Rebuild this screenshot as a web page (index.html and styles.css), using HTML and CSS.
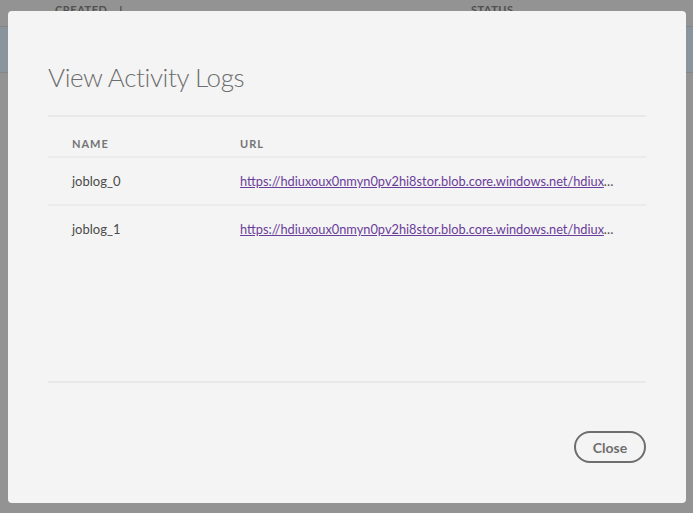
FILE: index.html
```html
<!DOCTYPE html>
<html>
<head>
<meta charset="utf-8">
<link rel="stylesheet" href="styles.css">
</head>
<body>
<div class="page">
  <div class="page-head">
    <span class="col-created">CREATED <span class="arrow">&#8595;</span></span>
    <span class="col-status">STATUS</span>
  </div>
  <div class="page-row"></div>
</div>
<div class="dialog">
  <h1 class="title">View Activity Logs</h1>
  <div class="body">
    <table class="logs">
      <thead>
        <tr><th class="c-name">NAME</th><th class="c-url">URL</th></tr>
      </thead>
      <tbody>
        <tr><td class="c-name">joblog_0</td><td class="c-url"><a href="#">https://hdiuxoux0nmyn0pv2hi8stor.blob.core.windows.net/hdiuxoux0nmyn0pv2hi8-2020/joblog_0</a></td></tr>
        <tr class="last"><td class="c-name">joblog_1</td><td class="c-url"><a href="#">https://hdiuxoux0nmyn0pv2hi8stor.blob.core.windows.net/hdiuxoux0nmyn0pv2hi8-2020/joblog_1</a></td></tr>
      </tbody>
    </table>
  </div>
  <div class="footer">
    <button class="close">Close</button>
  </div>
</div>
</body>
</html>
```

FILE: styles.css
```css
html, body {
  margin: 0;
  padding: 0;
}
body {
  width: 693px;
  height: 513px;
  background: #939393;
  font-family: Lato, "Open Sans", sans-serif;
  overflow: hidden;
}
.page-head {
  height: 26px;
  border-bottom: 1px solid #868686;
  position: relative;
  color: #505050;
  font-size: 11px;
  font-weight: 700;
  letter-spacing: 0.5px;
}
.col-created {
  position: absolute;
  left: 55px;
  top: 3px;
}
.arrow {
  margin-left: 6px;
}
.col-status {
  position: absolute;
  left: 471px;
  top: 3px;
}
.page-row {
  height: 45px;
  background: #8a949c;
  border-bottom: 1px solid #868686;
}
.dialog {
  position: fixed;
  left: 8px;
  top: 11px;
  width: 598px;
  height: 412px;
  padding: 40px;
  background: #f4f4f4;
  border-radius: 4px;
  display: flex;
  flex-direction: column;
}
.title {
  margin: 4px 0 0;
  font-size: 26px;
  font-weight: 300;
  letter-spacing: -0.4px;
  color: #6e6e6e;
  line-height: 44px;
  padding-bottom: 16px;
  border-bottom: 2px solid #e8e8e8;
}
.body {
  height: 264px;
}
.logs {
  width: 100%;
  border-collapse: collapse;
  table-layout: fixed;
}
.logs th {
  text-align: left;
  font-size: 11px;
  font-weight: 700;
  letter-spacing: 1px;
  color: #747474;
  height: 33px;
  vertical-align: bottom;
  padding: 0 0 6px 24px;
  border-bottom: 2px solid #ebebeb;
}
.logs th.c-name {
  width: 144px;
}
.logs td {
  font-size: 13px;
  color: #4b4b4b;
  height: 46px;
  padding: 0 28px 0 24px;
  white-space: nowrap;
  overflow: hidden;
  text-overflow: ellipsis;
  border-bottom: 2px solid #ebebeb;
}
.logs td.c-url {
  font-size: 12.8px;
}
.logs td.c-name {
  padding-right: 0;
}
.logs tr.last td {
  border-bottom: none;
}
.logs a {
  color: #6a3d9a;
  text-decoration: underline;
}
.footer {
  border-top: 2px solid #e8e8e8;
  flex: 1;
  display: flex;
  justify-content: flex-end;
  align-items: flex-end;
}
.close {
  width: 72px;
  height: 32px;
  border: 2px solid #6e6e6e;
  border-radius: 16px;
  background: transparent;
  color: #6e6e6e;
  font-family: Lato, "Open Sans", sans-serif;
  font-size: 14px;
  font-weight: 700;
  padding: 0;
}
```
